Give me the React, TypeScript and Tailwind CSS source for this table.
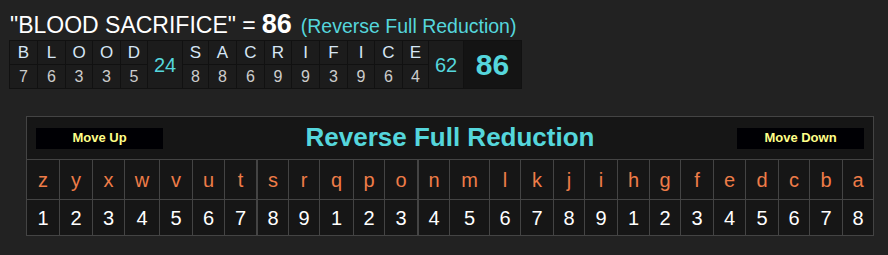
import React from 'react'

/* ── Phrase breakdown data ── */
const words = [
  { letters: 'BLOOD', values: [7, 6, 3, 3, 5], total: 24, widths: [28, 28, 27, 28, 27] },
  {
    letters: 'SACRIFICE',
    values: [8, 8, 6, 9, 9, 3, 9, 6, 4],
    total: 62,
    widths: [26, 28, 28, 27, 28, 28, 27, 28, 26],
  },
]

/* ── Cipher chart: reverse alphabet with reduced values ── */
const chart = 'zyxwvutsrqponmlkjihgfedcba'.split('').map((ch, i) => ({
  ch,
  value: (i % 9) + 1,
}))

const gridCols =
  'grid-cols-[32px_33px_32px_35px_33px_32px_32px_32px_31px_34px_31px_33px_32px_40px_31px_33px_31px_33px_32px_31px_33px_32px_33px_31px_33px_31px]'

const font = { fontFamily: '"Liberation Sans", Arial, sans-serif' }

function Breakdown() {
  return (
    <div className="flex gap-px bg-[#111] p-px w-fit">
      {words.map((w) => (
        <React.Fragment key={w.letters}>
          {w.letters.split('').map((ch, i) => (
            <div key={i} className="flex flex-col gap-px" style={{ width: w.widths[i] - 1 }}>
              <div className="h-[23px] bg-[#1c1c1c] flex items-center justify-center text-[17px] text-[#d6e6f5]">
                {ch}
              </div>
              <div className="h-[23px] bg-[#1c1c1c] flex items-center justify-center text-[16px] text-[#cccccc]">
                {w.values[i]}
              </div>
            </div>
          ))}
          <div className="w-[34px] bg-[#1c1c1c] flex items-center justify-center text-[20px] text-[#55d6dc]">
            {w.total}
          </div>
        </React.Fragment>
      ))}
      <div className="w-[57px] bg-[#141414] flex items-center justify-center text-[30px] font-bold text-[#55d6dc]">
        86
      </div>
    </div>
  )
}

function Chart() {
  return (
    <div className="w-[848px] border border-[#444] bg-[#161616]">
      <div className="h-[42px] flex items-center justify-between px-[9px]">
        <button className="w-[127px] h-[21px] bg-[#000004] text-[13px] font-bold text-[#ffff88]">
          Move Up
        </button>
        <div className="text-[26px] font-bold text-[#55d6dc] leading-none pb-[2px]">
          Reverse Full Reduction
        </div>
        <button className="w-[127px] h-[21px] bg-[#000004] text-[13px] font-bold text-[#ffff88]">
          Move Down
        </button>
      </div>
      <div className={`grid ${gridCols} border-t border-[#444]`}>
        {chart.map((c, i) => (
          <div
            key={c.ch}
            className={`h-[39px] flex items-center justify-center text-[20px] text-[#ee7c48] ${
              i === 0 ? '' : i === 7 || i === 12 ? 'border-l-2 border-[#444]' : 'border-l border-[#444]'
            }`}
          >
            {c.ch}
          </div>
        ))}
      </div>
      <div className={`grid ${gridCols} border-t border-[#444]`}>
        {chart.map((c, i) => (
          <div
            key={c.ch}
            className={`h-[35px] flex items-center justify-center text-[20px] text-white ${
              i === 0 ? '' : i === 7 || i === 12 ? 'border-l-2 border-[#444]' : 'border-l border-[#444]'
            }`}
          >
            {c.value}
          </div>
        ))}
      </div>
    </div>
  )
}

export default function App() {
  return (
    <div className="w-[888px] h-[255px] bg-[#222222] overflow-hidden" style={font}>
      <div className="pl-[10px] pt-[4px] h-[40px] flex items-baseline text-white whitespace-nowrap">
        <span className="text-[23px]">"BLOOD SACRIFICE" = </span>
        <span className="text-[27px] font-bold ml-[6px]">86</span>
        <span className="text-[19.5px] text-[#55d6dc] ml-[9px]">(Reverse Full Reduction)</span>
      </div>
      <div className="pl-[9px]">
        <Breakdown />
      </div>
      <div className="pl-[26px] pt-[27px]">
        <Chart />
      </div>
    </div>
  )
}
